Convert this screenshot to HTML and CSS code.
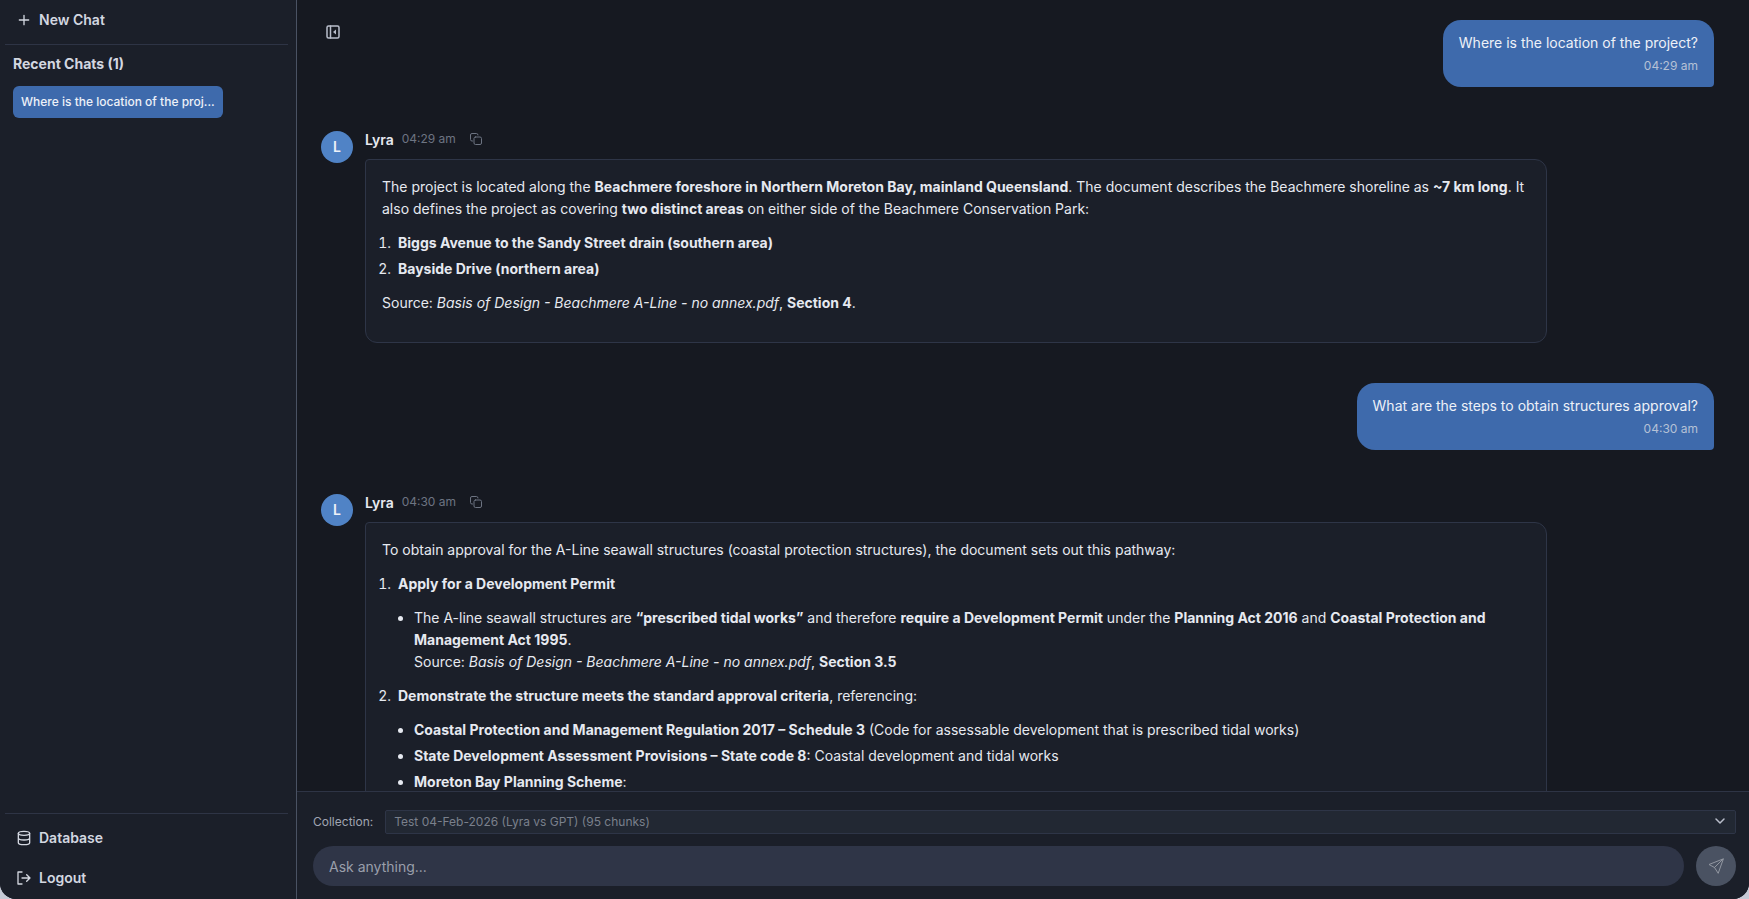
FILE: index.html
```html
<!DOCTYPE html>
<html lang="en">
	<head>
		<meta charset="utf-8">
		<title>Lyra</title>
		<link rel="stylesheet" href="styles.css">
	</head>
	<body>
		<div class="app">
			<aside class="sidebar">
				<button class="nav-btn">
					<svg class="icon" viewBox="0 0 24 24"><path d="M12 5v14M5 12h14"/></svg>
					New Chat
				</button>
				<div class="recent">
					<h2>Recent Chats (1)</h2>
					<button class="chat-link">Where is the location of the proj...</button>
				</div>
				<nav class="bottom">
					<button class="nav-btn">
						<svg class="icon" viewBox="0 0 24 24"><ellipse cx="12" cy="5" rx="8.5" ry="3"/><path d="M3.5 5v14c0 1.7 3.8 3 8.5 3s8.5-1.3 8.5-3V5M3.5 12c0 1.7 3.8 3 8.5 3s8.5-1.3 8.5-3"/></svg>
						Database
					</button>
					<button class="nav-btn">
						<svg class="icon" viewBox="0 0 24 24"><path d="M9 3H3v18h6M9 12h12M16 7l5 5-5 5"/></svg>
						Logout
					</button>
				</nav>
			</aside>
			<main class="main">
				<button class="toggle" aria-label="Hide sidebar">
					<svg viewBox="0 0 16 16"><rect x="2" y="2" width="12" height="12" rx="1.5"/><path d="M5.5 2v12"/><path class="solid" d="M11 5.5v5L8 8z"/></svg>
				</button>
				<div class="messages">
					<div class="question">
						<p>Where is the location of the project?</p>
						<time>04:29 am</time>
					</div>
					<article class="answer">
						<div class="avatar">L</div>
						<div class="answer-body">
							<div class="answer-head">
								<span class="name">Lyra</span>
								<time>04:29 am</time>
								<button class="copy" aria-label="Copy"><svg viewBox="0 0 12 12"><rect x="4" y="4" width="7.5" height="7.5" rx="1.5"/><path d="M2.5 8H2A1.5 1.5 0 0 1 .5 6.5V2A1.5 1.5 0 0 1 2 .5h4.5A1.5 1.5 0 0 1 8 2"/></svg></button>
							</div>
							<div class="card">
								<p>The project is located along the <b>Beachmere foreshore in Northern Moreton Bay, mainland Queensland</b>. The document describes the Beachmere shoreline as <b>~7 km long</b>. It also defines the project as covering <b>two distinct areas</b> on either side of the Beachmere Conservation Park:</p>
								<ol>
									<li><b>Biggs Avenue to the Sandy Street drain (southern area)</b></li>
									<li><b>Bayside Drive (northern area)</b></li>
								</ol>
								<p>Source: <i>Basis of Design - Beachmere A-Line - no annex.pdf</i>, <b>Section 4</b>.</p>
							</div>
						</div>
					</article>
					<div class="question">
						<p>What are the steps to obtain structures approval?</p>
						<time>04:30 am</time>
					</div>
					<article class="answer">
						<div class="avatar">L</div>
						<div class="answer-body">
							<div class="answer-head">
								<span class="name">Lyra</span>
								<time>04:30 am</time>
								<button class="copy" aria-label="Copy"><svg viewBox="0 0 12 12"><rect x="4" y="4" width="7.5" height="7.5" rx="1.5"/><path d="M2.5 8H2A1.5 1.5 0 0 1 .5 6.5V2A1.5 1.5 0 0 1 2 .5h4.5A1.5 1.5 0 0 1 8 2"/></svg></button>
							</div>
							<div class="card">
								<p>To obtain approval for the A-Line seawall structures (coastal protection structures), the document sets out this pathway:</p>
								<ol>
									<li><b>Apply for a Development Permit</b>
										<ul>
											<li>The A-line seawall structures are <b>“prescribed tidal works”</b> and therefore <b>require a Development Permit</b> under the <b>Planning Act 2016</b> and <b>Coastal Protection and Management Act 1995</b>.<br>Source: <i>Basis of Design - Beachmere A-Line - no annex.pdf</i>, <b>Section 3.5</b></li>
										</ul>
									</li>
									<li><b>Demonstrate the structure meets the standard approval criteria</b>, referencing:
										<ul>
											<li><b>Coastal Protection and Management Regulation 2017 – Schedule 3</b> (Code for assessable development that is prescribed tidal works)</li>
											<li><b>State Development Assessment Provisions – State code 8</b>: Coastal development and tidal works</li>
											<li><b>Moreton Bay Planning Scheme</b>:</li>
										</ul>
									</li>
								</ol>
							</div>
						</div>
					</article>
				</div>
				<form class="composer">
					<div class="collection">
						<label for="collection">Collection:</label>
						<div class="select-wrap">
							<select id="collection">
								<option>Test 04-Feb-2026 (Lyra vs GPT) (95 chunks)</option>
							</select>
							<svg class="chevron" viewBox="0 0 12 12"><path d="M2 4l4 4 4-4"/></svg>
						</div>
					</div>
					<div class="ask">
						<input type="text" placeholder="Ask anything..." aria-label="Message">
						<button type="button" class="send" aria-label="Send"><svg viewBox="0 0 16 16"><path d="M15 1L1 6.5l5.5 3L10 15zM15 1L6.5 9.5"/></svg></button>
					</div>
				</form>
			</main>
		</div>
	</body>
</html>
```
FILE: styles.css
```css
*{
	box-sizing:border-box;
}
body{
	margin:0;
	background-color:#c6cad6; /*window backdrop*/
	color:#e6e9f0;
	font-family: Inter, "Liberation Sans", sans-serif;
	font-size:14px;
	line-height:22px;
}
button, input, select{
	font:inherit;
	color:inherit;
	border:none;
	padding:0;
	background:none;
}
p, h2, ol, ul{
	margin:0;
}
svg{
	display:block;
	fill:none;
	stroke:currentColor;
	stroke-linecap:round;
	stroke-linejoin:round;
}
b{
	font-weight:700;
}

.app{
	display:flex;
	height:100vh;
	overflow:hidden;
	border-radius:0 0 16px 16px;
	background-color:#161921; /*near black*/
}

/* sidebar */
.sidebar{
	display:flex;
	flex-direction:column;
	flex:none;
	width:297px;
	padding:0 8px 0 5px;
	border-right:1px solid #4a5263;
	background-color:#1b1f29; /*dark slate*/
}
.nav-btn{
	display:flex;
	align-items:center;
	gap:7px;
	width:100%;
	height:40px;
	padding:0 11px;
	color:#d3d7e0;
	font-weight:600;
}
.icon{
	width:16px;
	height:16px;
	stroke-width:2;
}
.recent{
	flex:1;
	margin-top:4px;
	padding:8px;
	border-top:1px solid #2e3445;
}
.recent h2{
	color:#d3d7e0;
	font-size:14px;
	line-height:22px;
	font-weight:700;
}
.chat-link{
	height:32px;
	margin-top:11px;
	padding:0 8px;
	border-radius:6px;
	background-color:#3e6aac; /*blue*/
	color:#edf1f8;
	font-size:12px;
	font-weight:500;
}
.bottom{
	padding:4px 0 1px;
	border-top:1px solid #2e3445;
}

/* chat */
.main{
	position:relative;
	display:flex;
	flex-direction:column;
	flex:1;
	min-width:0;
}
.toggle{
	position:absolute;
	top:24px;
	left:28px;
	color:#b9becb;
}
.toggle svg{
	width:16px;
	height:16px;
	stroke-width:1.5;
}
.toggle .solid{
	fill:currentColor;
	stroke:none;
}
.messages{
	display:flex;
	flex-direction:column;
	flex:1;
	min-height:0;
	overflow:hidden;
	padding:20px 35px 0 24px;
}
.question{
	align-self:flex-end;
	flex:none;
	padding:12px 16px 10px;
	border-radius:18px 18px 4px 18px;
	background-color:#3e6aac; /*blue*/
	color:#edf1f8;
}
.question time{
	display:block;
	margin-top:1px;
	color:#b5c1d6;
	font-size:12px;
	text-align:right;
}
.answer{
	display:flex;
	flex:none;
	gap:12px;
	width:88%;
	margin:40px 0;
}
.avatar{
	flex:none;
	width:32px;
	height:32px;
	margin-top:4px;
	border-radius:50%;
	background-color:#5083c6; /*light blue*/
	color:#edf1f8;
	font-weight:600;
	line-height:32px;
	text-align:center;
}
.answer-body{
	flex:1;
	min-width:0;
}
.answer-head{
	display:flex;
	align-items:center;
	gap:8px;
	height:24px;
	margin-bottom:8px;
}
.name{
	padding-top:2px;
	font-weight:600;
}
.answer-head time{
	color:#6d7482;
	font-size:12px;
}
.copy{
	margin-left:6px;
	color:#6d7482;
}
.copy svg{
	width:12px;
	height:12px;
}
.card{
	padding:16px 16px 28px;
	border:1px solid #2e3547;
	border-radius:4px 12px 12px 12px;
	background-color:#1b1f29;
}
.card ol, .card ul{
	margin:12px 0;
	padding-left:16px;
}
.card ol > li::marker{
	content:counter(list-item) ".\2002";
}
.card ul{
	list-style-type:disc;
}
.card li + li{
	margin-top:4px;
}

/* composer */
.composer{
	flex:none;
	padding:18px 13px 13px 16px;
	border-top:1px solid #2e3445;
	background-color:#1b1f29;
}
.collection{
	display:flex;
	align-items:center;
	gap:12px;
	margin-bottom:12px;
	color:#a0a5b1;
	font-size:12px;
}
.select-wrap{
	position:relative;
	flex:1;
}
.select-wrap select{
	display:block;
	width:100%;
	height:24px;
	padding:0 8px;
	border:1px solid #2e3547;
	border-radius:2px;
	background-color:#222833;
	color:#7a808c;
	appearance:none;
}
.chevron{
	position:absolute;
	top:5px;
	right:10px;
	width:12px;
	height:12px;
	color:#b9becb;
	stroke-width:1.5;
}
.ask{
	display:flex;
	gap:12px;
}
.ask input{
	flex:1;
	min-width:0;
	height:40px;
	padding:0 16px;
	border-radius:20px;
	background-color:#2f3547;
}
.ask input::placeholder{
	color:#9a9fab;
	opacity:1;
}
.send{
	display:flex;
	align-items:center;
	justify-content:center;
	width:40px;
	height:40px;
	border-radius:50%;
	background-color:#4a5262;
	color:#9297a1;
}
.send svg{
	width:16px;
	height:16px;
}
```
